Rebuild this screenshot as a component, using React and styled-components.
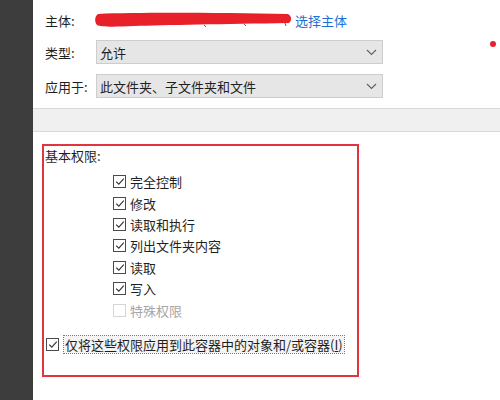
import React from "react";
import styled, {createGlobalStyle} from "styled-components";

const GlobalStyle = createGlobalStyle`
    html, body {
        margin: 0;
        padding: 0;
        background: #fff;
    }
    body {
        font-family: "Noto Sans CJK SC", "Noto Sans", sans-serif;
        font-size: 13px;
        color: #1f1f1f;
    }
`

const Window = styled.div`
    position: relative;
    display: flex;
    width: 500px;
    height: 400px;
    overflow: hidden;
`
const SideBar = styled.div`
    width: 33px;
    flex: none;
    background-color: #3d3d3d;
`
const Main = styled.div`
    flex: 1;
    display: flex;
    flex-direction: column;
    background: #fff;
`
const TopSection = styled.div`
    display: flex;
    flex-direction: column;
    padding: 8px 0 0 12px;
    height: 109px;
    box-sizing: border-box;
    border-bottom: 1px solid #d9d9d9;
`
const Row = styled.div`
    display: flex;
    align-items: center;
    height: 24px;
    margin-bottom: ${({gap}) => gap || 0}px;
`
const Label = styled.span`
    width: 51px;
    flex: none;
    line-height: 1;
`
const Scribble = styled.svg`
    display: block;
    flex: none;
    margin-right: 3px;
    margin-left: -2px;
`
const LinkText = styled.a`
    color: #1c6fd1;
    text-decoration: none;
    cursor: pointer;
`
const Select = styled.div`
    width: 287px;
    height: 24px;
    box-sizing: border-box;
    display: flex;
    align-items: center;
    justify-content: space-between;
    padding: 0 5px 0 3px;
    background-color: #e6e6e6;
    border: 1px solid #cdcdcd;
    color: #1f1f1f;
`
const Band = styled.div`
    height: 22px;
    background-color: #f0f0f0;
    border-bottom: 1px solid #dadada;
`
const Lower = styled.div`
    flex: 1;
    padding: 12px 0 0 9px;
`
const RedBox = styled.div`
    width: 317px;
    height: 233px;
    box-sizing: border-box;
    border: 2px solid #e2343e;
    padding: 0 0 0 1px;
`
const GroupTitle = styled.div`
    line-height: 20px;
    height: 20px;
    margin-bottom: 5px;
`
const List = styled.div`
    display: flex;
    flex-direction: column;
    padding-left: 68px;
`
const Item = styled.label`
    display: flex;
    align-items: center;
    height: 21.4px;
    color: ${({disabled}) => disabled ? '#a6a6a6' : '#1f1f1f'};
`
const Box = styled.span`
    width: 13px;
    height: 13px;
    box-sizing: border-box;
    flex: none;
    margin-right: 4px;
    border: 1px solid ${({disabled}) => disabled ? '#d6d6d6' : '#4a4a4a'};
    background: #fff;
    display: flex;
    align-items: center;
    justify-content: center;
`
const ApplyRow = styled.label`
    display: flex;
    align-items: center;
    height: 20px;
    margin-top: 14px;
    padding-left: 1px;
`
const FocusText = styled.span`
    outline: 1px dotted #777;
    outline-offset: 0;
    padding: 0 1px;
    line-height: 17px;
    margin-left: 1px;
    background: #f4f4f4;
`
const Dot = styled.span`
    position: absolute;
    left: 490px;
    top: 41px;
    width: 6px;
    height: 6px;
    border-radius: 50%;
    background-color: #e8212c;
`

const Chevron = () => (
    <svg width="11" height="7" viewBox="0 0 11 7">
        <path d="M1 1 L5.5 5.5 L10 1" fill="none" stroke="#606060" strokeWidth="1.1"/>
    </svg>
)

const Check = ({disabled}) => (
    <Box disabled={disabled}>
        {!disabled &&
            <svg width="10" height="9" viewBox="0 0 10 9">
                <path d="M1.2 4.6 L3.8 7.2 L8.8 1.6" fill="none" stroke="#333" strokeWidth="1.1"/>
            </svg>}
    </Box>
)

const perms = [
    {name: '完全控制'},
    {name: '修改'},
    {name: '读取和执行'},
    {name: '列出文件夹内容'},
    {name: '读取'},
    {name: '写入'},
    {name: '特殊权限', disabled: true},
]

export default function App() {
    return (
        <Window>
            <GlobalStyle/>
            <SideBar/>
            <Main>
                <TopSection>
                    <Row gap={8}>
                        <Label>主体:</Label>
                        <Scribble width="198" height="16" viewBox="0 0 198 16">
                            <path d="M4 2 C50 0 130 1 194 2 C198 4 198 9 195 11 C130 12 70 13 40 14 C20 15 7 15 3 13 C0 9 1 4 4 2 Z" fill="#e8202a"/>
                            <path d="M110 13 L112 15 M150 12 L152 14 M191 11 L192 14" stroke="#b04048" strokeWidth="1"/>
                        </Scribble>
                        <LinkText>选择主体</LinkText>
                    </Row>
                    <Row gap={10}>
                        <Label>类型:</Label>
                        <Select>允许<Chevron/></Select>
                    </Row>
                    <Row>
                        <Label>应用于:</Label>
                        <Select>此文件夹、子文件夹和文件<Chevron/></Select>
                    </Row>
                </TopSection>
                <Band/>
                <Lower>
                    <RedBox>
                        <GroupTitle>基本权限:</GroupTitle>
                        <List>
                            {perms.map(p => (
                                <Item key={p.name} disabled={p.disabled}>
                                    <Check disabled={p.disabled}/>
                                    {p.name}
                                </Item>
                            ))}
                        </List>
                        <ApplyRow>
                            <Check/>
                            <FocusText>仅将这些权限应用到此容器中的对象和/或容器(<u>I</u>)</FocusText>
                        </ApplyRow>
                    </RedBox>
                </Lower>
            </Main>
            <Dot/>
        </Window>
    )
}
